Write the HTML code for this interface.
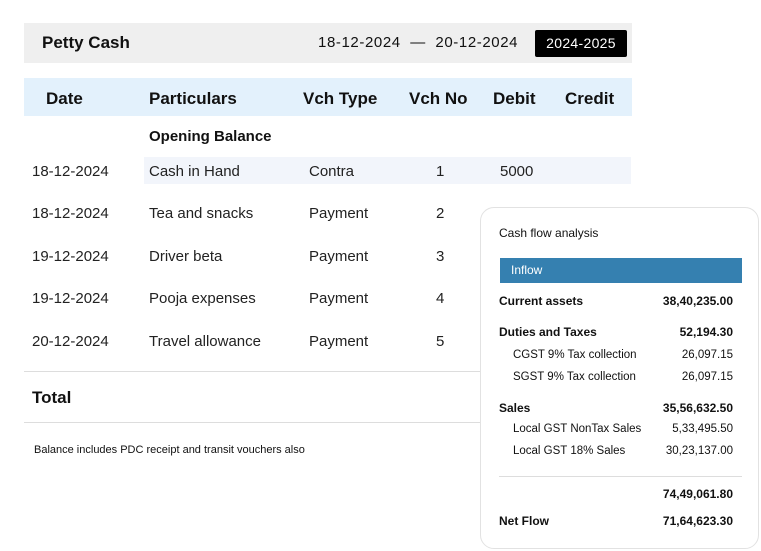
<!DOCTYPE html><html><head><style>
body{margin:0;width:761px;height:551px;background:#fff;font-family:"Liberation Sans",sans-serif;color:#111;position:relative;overflow:hidden}
.a{position:absolute;white-space:nowrap}
.b{font-weight:bold}
.c{font-size:15px;color:#222}
.k{position:absolute;white-space:nowrap;font-size:12px}
.r{text-align:right;right:25px}
</style></head><body>
<div class="a" style="left:24px;top:23px;width:608px;height:40px;background:#efefef"></div>
<div class="a b" style="left:42px;top:33px;font-size:17px">Petty Cash</div>
<div class="a" style="left:318px;top:34px;font-size:15px;letter-spacing:0.6px">18-12-2024 &nbsp;— &nbsp;20-12-2024</div>
<div class="a" style="left:535px;top:30px;width:92px;height:27px;background:#000;border-radius:2px;color:#fff;font-size:14px;text-align:center;line-height:27px;letter-spacing:0.3px">2024-2025</div>
<div class="a" style="left:24px;top:78px;width:608px;height:38px;background:#e3f1fc"></div>
<div class="a b" style="left:46px;top:89px;font-size:17px">Date</div>
<div class="a b" style="left:149px;top:89px;font-size:17px">Particulars</div>
<div class="a b" style="left:303px;top:89px;font-size:17px">Vch Type</div>
<div class="a b" style="left:409px;top:89px;font-size:17px">Vch No</div>
<div class="a b" style="left:493px;top:89px;font-size:17px">Debit</div>
<div class="a b" style="left:565px;top:89px;font-size:17px">Credit</div>
<div class="a b" style="left:149px;top:128px;font-size:15px">Opening Balance</div>
<div class="a" style="left:144px;top:157px;width:487px;height:27px;background:#f2f5fb"></div>
<div class="a c" style="left:32px;top:163px">18-12-2024</div><div class="a c" style="left:149px;top:163px">Cash in Hand</div><div class="a c" style="left:309px;top:163px">Contra</div><div class="a c" style="left:436px;top:163px">1</div><div class="a c" style="left:500px;top:163px">5000</div>
<div class="a c" style="left:32px;top:205px">18-12-2024</div><div class="a c" style="left:149px;top:205px">Tea and snacks</div><div class="a c" style="left:309px;top:205px">Payment</div><div class="a c" style="left:436px;top:205px">2</div>
<div class="a c" style="left:32px;top:248px">19-12-2024</div><div class="a c" style="left:149px;top:248px">Driver beta</div><div class="a c" style="left:309px;top:248px">Payment</div><div class="a c" style="left:436px;top:248px">3</div>
<div class="a c" style="left:32px;top:290px">19-12-2024</div><div class="a c" style="left:149px;top:290px">Pooja expenses</div><div class="a c" style="left:309px;top:290px">Payment</div><div class="a c" style="left:436px;top:290px">4</div>
<div class="a c" style="left:32px;top:333px">20-12-2024</div><div class="a c" style="left:149px;top:333px">Travel allowance</div><div class="a c" style="left:309px;top:333px">Payment</div><div class="a c" style="left:436px;top:333px">5</div>
<div class="a" style="left:24px;top:371px;width:460px;height:1px;background:#ddd"></div>
<div class="a b" style="left:32px;top:388px;font-size:17px">Total</div>
<div class="a" style="left:24px;top:422px;width:460px;height:1px;background:#ddd"></div>
<div class="a" style="left:34px;top:444px;font-size:11px">Balance includes PDC receipt and transit vouchers also</div>
<div class="a" style="left:480px;top:207px;width:279px;height:342px;background:#fff;border:1px solid #e2e2e2;border-radius:14px;box-sizing:border-box">
<div class="k" style="left:18px;top:18px;font-size:12px">Cash flow analysis</div>
<div class="k" style="left:19px;top:50px;width:242px;height:25px;background:#3580b0;color:#fff;line-height:25px;padding-left:11px;box-sizing:border-box">Inflow</div>
<div class="k b" style="left:18px;top:86px">Current assets</div><div class="k b r" style="top:86px">38,40,235.00</div>
<div class="k b" style="left:18px;top:117px">Duties and Taxes</div><div class="k b r" style="top:117px">52,194.30</div>
<div class="k" style="left:32px;top:141px;font-size:11.5px">CGST 9% Tax collection</div><div class="k r" style="top:141px;font-size:11.5px">26,097.15</div>
<div class="k" style="left:32px;top:163px;font-size:11.5px">SGST 9% Tax collection</div><div class="k r" style="top:163px;font-size:11.5px">26,097.15</div>
<div class="k b" style="left:18px;top:193px">Sales</div><div class="k b r" style="top:193px">35,56,632.50</div>
<div class="k" style="left:32px;top:215px;font-size:11.5px">Local GST NonTax Sales</div><div class="k r" style="top:215px;font-size:11.5px">5,33,495.50</div>
<div class="k" style="left:32px;top:237px;font-size:11.5px">Local GST 18% Sales</div><div class="k r" style="top:237px;font-size:11.5px">30,23,137.00</div>
<div class="k" style="left:18px;top:268px;width:243px;height:1px;background:#ddd"></div>
<div class="k b r" style="top:279px">74,49,061.80</div>
<div class="k b" style="left:18px;top:306px">Net Flow</div><div class="k b r" style="top:306px">71,64,623.30</div>
</div>
</body></html>
